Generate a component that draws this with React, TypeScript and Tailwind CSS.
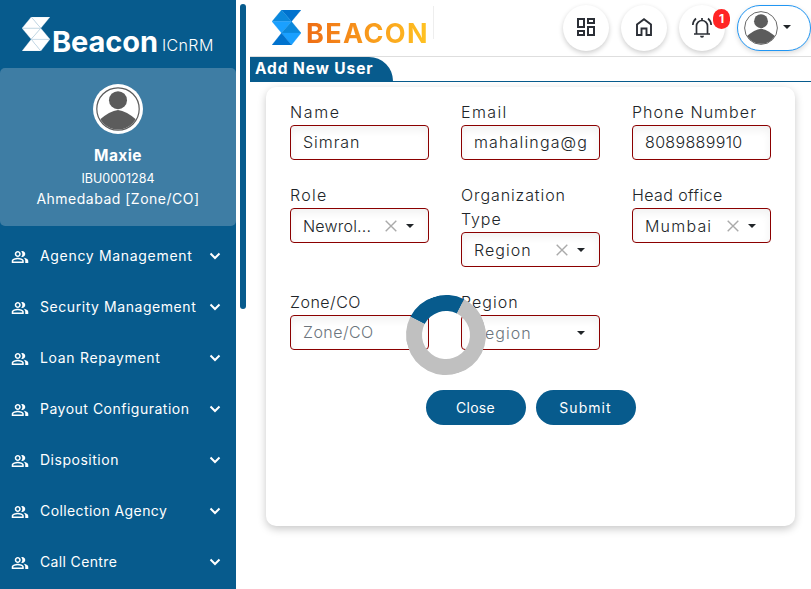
import React from "react";
import { MdOutlinePeopleAlt, MdOutlineDashboard, MdOutlineNotificationsActive } from "react-icons/md";

const menu = [
  { label: "Agency Management", track: "tracking-[0.68px]" },
  { label: "Security Management", track: "tracking-[0.56px]" },
  { label: "Loan Repayment", track: "tracking-[0.68px]" },
  { label: "Payout Configuration", track: "tracking-[0.5px]" },
  { label: "Disposition", track: "tracking-[0.52px]" },
  { label: "Collection Agency", track: "tracking-[0.4px]" },
  { label: "Call Centre", track: "tracking-[0.36px]" },
];

function Avatar({ className }: { className: string }) {
  return (
    <svg viewBox="0 0 44 44" className={className}>
      <defs>
        <clipPath id="avatar-clip"><circle cx="22" cy="22" r="20.5" /></clipPath>
      </defs>
      <circle cx="22" cy="22" r="21.2" fill="#fff" stroke="#5c5c5c" strokeWidth="1.2" />
      <g clipPath="url(#avatar-clip)" fill="#5c5c5c">
        <circle cx="22" cy="13.2" r="9" />
        <path d="M2 34 Q14 23.500 22 23 Q30 23.500 42 34 V44 H2Z" />
      </g>
    </svg>
  );
}

function Mark({ className, colors, line }: { className: string; colors: string[]; line?: string }) {
  const tris = ["9.5,0 29,0 19.5,11.5", "9.5,0 19.5,11.5 0,11.5", "0,11.5 19.5,11.5 9.5,23", "19.5,11.5 29,23 9.5,23", "9.5,23 29,23 19.5,35", "9.5,23 19.5,35 0,35"];
  return (
    <svg viewBox="0 0 29 35" className={className} preserveAspectRatio="none">
      {tris.map((p, i) => (
        <polygon key={p} points={p} fill={colors[i]} stroke={line ?? colors[i]} strokeWidth="0.3" />
      ))}
    </svg>
  );
}

function Caret() {
  return <span className="h-0 w-0 shrink-0 border-x-[4.5px] border-t-[4.5px] border-x-transparent border-t-[#212529]" />;
}

function Field({ label, value, track = "", labelTrack = "", select, clear, placeholder }: {
  label: string; value: string; track?: string; labelTrack?: string; select?: boolean; clear?: boolean; placeholder?: boolean;
}) {
  return (
    <div className="w-[139px]">
      <div className={`-mt-px mb-px text-[16px] leading-6 font-light text-[#212529] ${labelTrack}`}>{label}</div>
      <div className="flex h-[35px] items-center rounded-[4px] border border-[#8b0000] bg-white pl-3 pr-[14px] shadow-[inset_0_4px_8px_rgba(0,0,0,0.06)]">
        <span className={`flex-1 whitespace-nowrap text-[16px] leading-6 font-light ${select ? "" : "pb-px"} ${placeholder ? "text-[#6c757d]" : "text-[#212529]"} ${track}`}>{value}</span>
        {clear && (
          <svg viewBox="0 0 12 12" className="mr-[9px] h-3 w-3 shrink-0"><path d="M.7.7 11.3 11.3M11.3.7.7 11.3" stroke="#aaa" strokeWidth="1.4" /></svg>
        )}
        {select && <Caret />}
      </div>
    </div>
  );
}

export default function App() {
  return (
    <div className="relative flex h-[589px] w-[811px] overflow-hidden bg-white font-['Inter',sans-serif]">
      <aside className="h-full w-[236px] shrink-0 bg-[#075b8d] text-white">
        <div className="flex h-[68px] items-start pl-[22px] pt-[17px]">
          <Mark className="h-[34px] w-[28px] shrink-0" colors={["#fff", "#fff", "#fff", "#fff", "#fff", "#fff"]} line="#b9d3e4" />
          <span className="ml-[2px] mt-[9px] text-[29px] leading-[31px] font-bold tracking-[-0.1px]">Beacon</span>
          <span className="ml-[4px] mt-[17px] text-[16px] leading-[23px] font-light tracking-[0.4px]">ICnRM</span>
        </div>
        <div className="flex h-[158px] flex-col items-center rounded-[5px] bg-[#3e7da4] pt-4">
          <div className="flex h-[50px] w-[50px] items-center justify-center rounded-full bg-white">
            <Avatar className="h-11 w-11" />
          </div>
          <div className="mt-[10px] text-[15.5px] leading-6 font-bold tracking-[0.4px]">Maxie</div>
          <div className="text-[12.5px] leading-[22px]">IBU0001284</div>
          <div className="-mt-px text-[14px] leading-5 tracking-[0.5px]">Ahmedabad [Zone/CO]</div>
        </div>
        <nav className="pt-[4px]">
          {menu.map((m) => (
            <div key={m.label} className="flex h-[51px] items-center pl-[11px] pr-[15px]">
              <MdOutlinePeopleAlt className="mt-[2px] h-[18px] w-[18px]" />
              <span className={`ml-[11px] flex-1 whitespace-nowrap text-[14px] ${m.track}`}>{m.label}</span>
              <svg viewBox="0 0 12 8" className="mt-px h-2 w-3"><path d="M1.5 1.5 6 6 10.5 1.5" fill="none" stroke="#fff" strokeWidth="2" /></svg>
            </div>
          ))}
        </nav>
      </aside>
      <div className="ml-1 mt-1 h-[305px] w-[6px] shrink-0 rounded-[3px] bg-[#075b8d]" />
      <main className="ml-1 flex-1">
        <header className="flex h-[57px] items-start justify-between border-b border-[#dedede]">
          <div className="mt-[6px] flex h-[33px] w-[184px] items-start border-r border-[#eee] pl-[22px] pt-1">
            <Mark className="h-[35px] w-[29px] shrink-0" colors={["#0072ce", "#0b88dc", "#1aa0ff", "#0b88dc", "#1aa0ff", "#0072ce"]} />
            <span className="ml-[5px] mt-[7px] bg-gradient-to-r from-[#ee6c15] to-[#ffc322] bg-clip-text text-[27px] leading-[33px] font-bold tracking-[1.4px] text-transparent">BEACON</span>
          </div>
          <div className="mt-[5px] flex gap-3 text-[#2b2f36]">
            <div className="flex h-[46px] w-[46px] items-center justify-center rounded-full bg-white shadow-[0_2px_5px_rgba(0,0,0,0.2)]">
              <MdOutlineDashboard className="mb-[2px] h-6 w-6" />
            </div>
            <div className="flex h-[46px] w-[46px] items-center justify-center rounded-full bg-white shadow-[0_2px_5px_rgba(0,0,0,0.2)]">
              <svg viewBox="0 0 24 24" className="mb-[2px] h-6 w-6"><path d="M5 20V9.500L12 4.200l7 5.300V20H14.500V13.500H9.500V20Z" fill="none" stroke="currentColor" strokeWidth="1.900" /></svg>
            </div>
            <div className="relative flex h-[46px] w-[46px] items-center justify-center rounded-full bg-white shadow-[0_2px_5px_rgba(0,0,0,0.2)]">
              <svg viewBox="0 0 24 24" className="mb-[2px] h-6 w-6" fill="none" stroke="currentColor" strokeWidth="1.700">
                <path d="M4 19H20M6.500 19V11a5.500 5.500 0 0 1 11 0V19M12 3V5.500M6 3.500Q3 6 2.800 10M18 3.500Q21 6 21.200 10" />
                <path d="M10 20.700h4a2 2 0 0 1-4 0Z" fill="currentColor" stroke="none" />
              </svg>
              <span className="absolute left-[34px] top-1 flex h-5 w-[17px] items-center justify-center rounded-[9px] bg-[#ff2424] text-[12px] font-bold text-white">1</span>
            </div>
            <div className="flex h-[46px] w-[74px] items-center rounded-[23px] border border-[#2196f3] bg-white pl-[6px] shadow-[0_2px_5px_rgba(0,0,0,0.15)]">
              <Avatar className="h-[34px] w-[34px]" />
              <span className="mb-[2px] ml-[5px] flex"><Caret /></span>
            </div>
          </div>
        </header>
        <div className="h-[25px] border-b border-[#075b8d]">
          <div className="h-[24px] w-[143px] rounded-tr-[24px] bg-[#075b8d] pl-[5px] text-[15.5px] leading-6 font-bold tracking-[0.9px] whitespace-nowrap text-white">Add New User</div>
        </div>
        <section className="ml-4 mt-[5px] h-[439px] w-[529px] rounded-[10px] bg-white px-6 pt-[14px] shadow-[0_3px_8px_rgba(0,0,0,0.22)]">
          <div className="grid grid-cols-[139px_139px_139px] gap-x-8 gap-y-6">
            <Field label="Name" value="Simran" labelTrack="tracking-[1.6px]" track="tracking-[0.95px]" />
            <Field label="Email" value="mahalinga@g" labelTrack="tracking-[1.4px]" track="tracking-[1.15px]" />
            <Field label="Phone Number" value="8089889910" labelTrack="tracking-[1.05px]" track="tracking-[0.35px]" />
            <Field label="Role" value="Newrol..." labelTrack="tracking-[1.3px]" track="tracking-[0.2px]" select clear />
            <Field label="Organization Type" value="Region" labelTrack="tracking-[0.9px]" track="tracking-[1.05px]" select clear />
            <Field label="Head office" value="Mumbai" labelTrack="tracking-[0.4px]" track="tracking-[1.2px]" select clear />
            <Field label="Zone/CO" value="Zone/CO" labelTrack="tracking-[0.5px]" track="tracking-[0.45px]" placeholder />
            <Field label="Region" value="Region" labelTrack="tracking-[1.05px]" track="tracking-[1.05px]" placeholder select />
          </div>
          <div className="mt-10 flex justify-center gap-[10px] text-[14px] text-white">
            <button className="h-[35px] w-[100px] rounded-full bg-[#075b8d] pb-px tracking-[0.3px]">Close</button>
            <button className="h-[35px] w-[100px] rounded-full bg-[#075b8d] pb-px tracking-[1.05px]">Submit</button>
          </div>
        </section>
      </main>
      <div className="absolute left-[406px] top-[295px] h-20 w-20 -rotate-[18deg] rounded-full border-[16px] border-[#c0c0c0] border-t-[#075b8d]" />
    </div>
  );
}
